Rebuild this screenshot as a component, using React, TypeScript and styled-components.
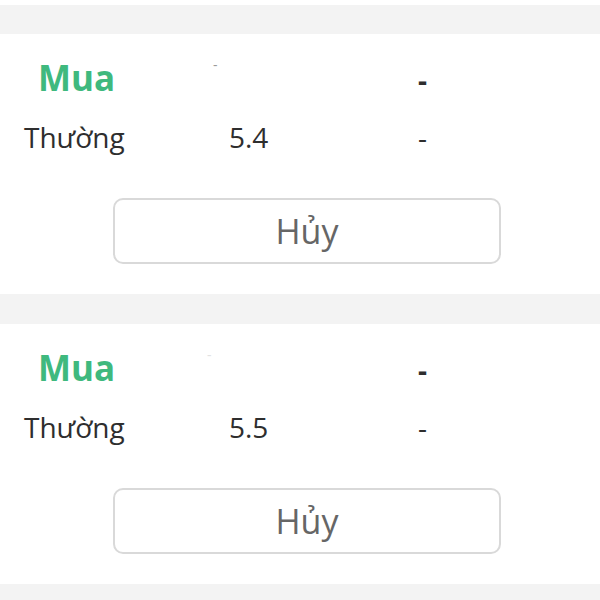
import React from 'react';
import styled, { createGlobalStyle } from 'styled-components';

const GlobalStyle = createGlobalStyle`
  html, body {
    margin: 0;
    padding: 0;
    background: #ffffff;
  }
  body {
    font-family: "Open Sans", "Noto Sans", sans-serif;
    color: #2e2e2e;
  }
`;

const Page = styled.div`
  display: flex;
  flex-direction: column;
  width: 600px;
  height: 600px;
  overflow: hidden;
  padding-top: 5px;
  box-sizing: border-box;
`;

const Divider = styled.div<{ $h: number }>`
  height: ${(p) => p.$h}px;
  background: #f3f3f3;
  flex-shrink: 0;
`;

const Card = styled.div`
  display: flex;
  flex-direction: column;
  background: #ffffff;
  padding: 21px 0 30px 24px;
  height: 260px;
  box-sizing: border-box;
  flex-shrink: 0;
`;

const Row = styled.div<{ $head?: boolean }>`
  display: grid;
  grid-template-columns: 205px 189px 1fr;
  align-items: baseline;
  height: ${(p) => (p.$head ? 46 : 38)}px;
  margin-bottom: ${(p) => (p.$head ? 17 : 0)}px;
`;

const Side = styled.div`
  padding-left: 14px;
  font-size: 35px;
  font-weight: 700;
  line-height: 46px;
  color: #3fb97e;
`;

const Faint = styled.div<{ $tone: string; $shift: number }>`
  margin-left: ${(p) => p.$shift}px;
  align-self: start;
  padding-top: 2px;
  font-size: 14px;
  line-height: 16px;
  color: ${(p) => p.$tone};
`;

const Cell = styled.div<{ $bold?: boolean }>`
  font-size: 28px;
  line-height: ${(p) => (p.$bold ? 46 : 38)}px;
  font-weight: ${(p) => (p.$bold ? 700 : 400)};
  color: #2e2e2e;
`;

const CancelButton = styled.button`
  margin: 42px 0 0 89px;
  width: 388px;
  height: 66px;
  border: 2px solid #d9d9d9;
  border-radius: 10px;
  background: #ffffff;
  font-family: "Open Sans", "Noto Sans", sans-serif;
  font-size: 34px;
  color: #666666;
  padding: 0;
  cursor: pointer;
`;

type Order = { price: string; faint: string; shift: number };

const orders: Order[] = [
  { price: '5.4', faint: '#9a9a9a', shift: -16 },
  { price: '5.5', faint: '#e2e2e2', shift: -22 },
];

function OrderCard({ order }: { order: Order }) {
  return (
    <Card>
      <Row $head>
        <Side>Mua</Side>
        <Faint $tone={order.faint} $shift={order.shift}>-</Faint>
        <Cell $bold>-</Cell>
      </Row>
      <Row>
        <Cell>Thường</Cell>
        <Cell>{order.price}</Cell>
        <Cell>-</Cell>
      </Row>
      <CancelButton>Hủy</CancelButton>
    </Card>
  );
}

export default function App() {
  return (
    <Page>
      <GlobalStyle />
      <Divider $h={29} />
      {orders.map((o, i) => (
        <React.Fragment key={o.price}>
          <OrderCard order={o} />
          <Divider $h={i === 0 ? 30 : 40} />
        </React.Fragment>
      ))}
    </Page>
  );
}
